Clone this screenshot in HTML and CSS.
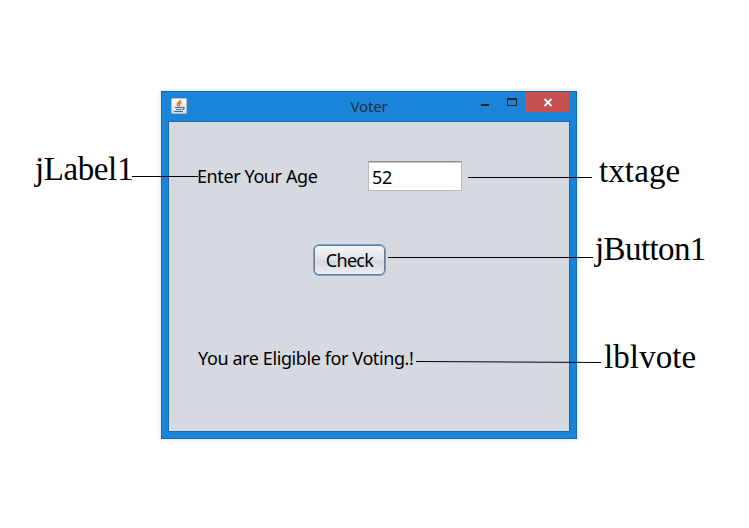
FILE: index.html
```html
<!DOCTYPE html>
<html lang="en">
<head>
<meta charset="utf-8">
<title>Voter</title>
<link rel="stylesheet" href="styles.css">
</head>
<body>
<main class="diagram">
  <section class="window">
    <header class="titlebar">
      <svg class="java" width="16" height="16" viewBox="0 0 16 16">
        <defs><linearGradient id="g" x2="0" y2="1"><stop stop-color="#fff"/><stop offset="1" stop-color="#d5d8dc"/></linearGradient></defs>
        <rect x=".5" y=".5" width="15" height="15" rx="1" fill="url(#g)" stroke="#b5bcc4"/>
        <path d="M9.300 2C9.600 4 6 4.800 6.300 6.500Q6.500 7.500 7.500 8.300M10.600 4.500Q7.500 5.500 8.500 6.800Q9.200 7.500 8.300 8.500" fill="none" stroke="#e5761c" stroke-width="1.500"/>
        <path d="M4 9.500H11M5 11.500H10.500M3 13.500H12M11.500 9.500C14 9 13.500 11 11.300 11.600" fill="none" stroke="#3f6f90" stroke-width="1.200"/>
      </svg>
      <h1 class="title">Voter</h1>
      <div class="controls">
        <svg width="84" height="20" viewBox="0 0 84 20">
          <path d="M39 0H84V20H39Z" fill="#c75050"/>
          <path d="M-5 12H3V14H-5Z" fill="#222" />
          <path d="M21 6H31V14H21ZM22 8V13H30V8Z" fill="#222" fill-rule="evenodd"/>
          <path d="M58.500 7L65.500 14M65.500 7L58.500 14" stroke="#fff" stroke-width="1.800"/>
        </svg>
      </div>
    </header>
    <form class="form">
      <div class="row">
        <label class="age-label" for="age">Enter Your Age</label>
        <input class="age" id="age" value="52">
      </div>
      <button class="check" type="button">Check</button>
      <p class="result">You are Eligible for Voting.!</p>
    </form>
  </section>
  <svg class="lines" width="749" height="528" viewBox="0 0 749 528">
    <path d="M132 176.500H198M468 177.500H592M388 257.500H593M416 361.500L601 362.500"/>
  </svg>
  <span class="note n-label">jLabel1</span>
  <span class="note n-text">txtage</span>
  <span class="note n-button">jButton1</span>
  <span class="note n-vote">lblvote</span>
</main>
</body>
</html>
```
FILE: styles.css
```css
* { box-sizing: border-box; }
body { margin: 0; background: #fff; }
.diagram {
  position: relative;
  width: 749px;
  height: 528px;
  padding: 91px 0 0 161px;
  overflow: hidden;
}
.window {
  width: 416px;
  height: 348px;
  padding: 0 6px 6px;
  border: 1px solid #1368ae;
  background: #1a84d9;
  box-shadow: 0 0 5px rgba(0, 0, 0, .16);
}
.titlebar {
  display: grid;
  grid-template-columns: 84px 1fr 84px;
  height: 29px;
}
.java { margin: 6px 0 0 3px; }
.title {
  margin: 3px 0 0 0;
  text-align: center;
  font: 15px/22px "Noto Sans", sans-serif;
  letter-spacing: -.2px;
  color: #1d3042;
}
.controls { height: 20px; }
.controls svg { display: block; overflow: visible; }
.form {
  height: 311px;
  padding: 39px 28px 0;
  border: 1px solid #1368ae;
  background: #d6d9e0;
  font: 18px/20px "Noto Sans", sans-serif;
  letter-spacing: -.4px;
  color: #000;
}
.row { display: flex; height: 30px; align-items: center; }
.age-label { width: 171px; white-space: nowrap; }
.age {
  width: 94px;
  height: 30px;
  padding: 1px 3px 0;
  border: 1px solid #b9babd;
  border-top-color: #8c8d90;
  background: #fff;
  box-shadow: inset 0 1px #c9cacc;
  font: inherit;
  letter-spacing: inherit;
  color: inherit;
}
.check {
  display: block;
  width: 71px;
  height: 30px;
  margin: 54px 0 0 117px;
  padding: 0;
  border: 1px solid #687991;
  border-radius: 5px;
  background: linear-gradient(#f5f6f8, #dfe2e7 48%, #d4d7de 55%, #eceef3);
  box-shadow: 0 0 0 1px #73a4d1;
  font: inherit;
  letter-spacing: -.7px;
  color: inherit;
}
.result { margin: 73px 0 0; padding-left: 1px; white-space: nowrap; }
.lines { position: absolute; inset: 0; pointer-events: none; }
.lines path { stroke: #000; stroke-width: 1; fill: none; }
.note {
  position: absolute;
  font: 33px/38px "Liberation Serif", serif;
  color: #000;
  white-space: nowrap;
}
.n-label { left: 35px; top: 150px; letter-spacing: -.4px; }
.n-text { left: 599px; top: 152px; letter-spacing: .1px; }
.n-button { left: 595px; top: 230px; letter-spacing: -.6px; }
.n-vote { left: 604px; top: 338px; letter-spacing: .1px; }
```
